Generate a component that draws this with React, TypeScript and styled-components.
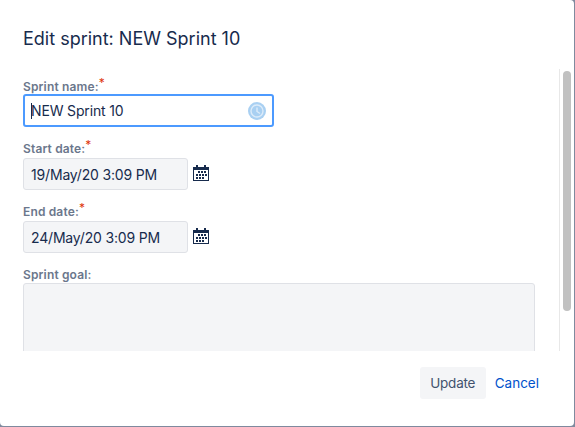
import React from "react";
import styled, { createGlobalStyle } from "styled-components";

const GlobalStyle = createGlobalStyle`
  html, body {
    margin: 0;
    padding: 0;
    background: #7f8a9e;
  }
  * {
    box-sizing: border-box;
  }
`;

const Dialog = styled.div`
  width: 574px;
  height: 426px;
  background: #fff;
  border-radius: 0 4px 4px 4px;
  display: flex;
  flex-direction: column;
  overflow: hidden;
  font-family: Inter, "Noto Sans", sans-serif;
`;

const Header = styled.div`
  height: 69px;
  flex: none;
  padding: 27px 23px 0;
`;

const Title = styled.h2`
  margin: 0;
  font-size: 18px;
  line-height: 24px;
  font-weight: 400;
  color: #172b4d;
`;

const Body = styled.div`
  flex: 1;
  min-height: 0;
  display: flex;
  overflow: hidden;
`;

const Form = styled.form`
  flex: 1;
  padding: 0 24px 0 23px;
  display: flex;
  flex-direction: column;
  gap: 4px;
`;

const Label = styled.label`
  display: block;
  height: 21px;
  padding-top: 10px;
  font-size: 12px;
  line-height: 16px;
  font-weight: 600;
  color: #6b778c;
  letter-spacing: 0.15px;
`;

const Star = styled.span`
  position: relative;
  top: -4px;
  color: #de350b;
  font-size: 12px;
  font-weight: 400;
  line-height: 0;
`;

const NameBox = styled.div`
  width: 251px;
  height: 33px;
  margin-top: 4px;
  border: 2px solid #4c9aff;
  border-radius: 3px;
  background: #fff;
  display: flex;
  align-items: center;
  justify-content: space-between;
  padding: 0 6px;
  font-size: 14px;
  letter-spacing: -0.15px;
  color: #172b4d;
`;

const Value = styled.span`
  white-space: nowrap;
`;

const Caret = styled.span`
  display: inline-block;
  width: 1px;
  height: 16px;
  background: #172b4d;
  vertical-align: -3px;
  margin-right: -1px;
`;

const DateRow = styled.div`
  display: flex;
  align-items: center;
  gap: 5px;
  margin-top: 6px;
`;

const DateBox = styled.div`
  width: 165px;
  height: 32px;
  padding: 0 7px;
  border: 1px solid #dfe1e6;
  border-radius: 3px;
  background: #f4f5f7;
  display: flex;
  align-items: center;
  font-size: 14px;
  letter-spacing: -0.17px;
  color: #172b4d;
  white-space: nowrap;
`;

const GoalBox = styled.div`
  width: 512px;
  height: 120px;
  margin-top: 5px;
  border: 1px solid #dfe1e6;
  border-radius: 3px;
  background: #f4f5f7;
`;

const ScrollTrack = styled.div`
  width: 15px;
  flex: none;
  border-left: 1px solid #e8e8e8;
  padding: 2px 3px 0;
`;

const ScrollThumb = styled.div`
  width: 8px;
  height: 240px;
  background: #c1c1c1;
  border-radius: 4px;
`;

const Footer = styled.div`
  height: 75px;
  flex: none;
  display: flex;
  justify-content: flex-end;
  align-items: flex-start;
  padding: 16px 35px 0 0;
  gap: 9px;
`;

const UpdateButton = styled.button`
  width: 66px;
  height: 32px;
  border: none;
  border-radius: 3px;
  background: #f4f5f7;
  color: #42526e;
  font: inherit;
  font-size: 13.5px;
  letter-spacing: -0.2px;
  padding: 0;
`;

const CancelLink = styled.a`
  color: #0052cc;
  font-size: 13.5px;
  line-height: 32px;
  text-decoration: none;
`;

const CalendarSvg = styled.svg`
  margin-bottom: 2px;
`;

const ClockIcon = () => (
  <svg width="18" height="18" viewBox="0 0 18 18">
    <circle cx="9" cy="9" r="9" fill="#a9d0f2" />
    <circle cx="9" cy="9" r="6" fill="#a9d0f2" stroke="#dcebf9" strokeWidth="1.4" />
    <path d="M9 5.5V9.5L12 11.5" fill="none" stroke="#dcebf9" strokeWidth="1.4" />
  </svg>
);

const CalendarIcon = () => (
  <CalendarSvg width="16" height="16" viewBox="0 0 16 16" fill="#172b4d">
    <rect x="3" y="0" width="2" height="3" />
    <rect x="11" y="0" width="2" height="3" />
    <path d="M0 2h16v14H0zM1 5v10h14V5z" fillRule="evenodd" />
    <path d="M5 6h2v2H5zM8 6h2v2H8zM11 6h2v2h-2zM3 9h2v2H3zM6 9h2v2H6zM9 9h2v2H9zM12 9h2v2h-2zM3 12h2v2H3zM6 12h2v2H6zM9 12h2v2H9z" />
  </CalendarSvg>
);

export default function App() {
  return (
    <>
      <GlobalStyle />
      <Dialog>
        <Header>
          <Title>Edit sprint: NEW Sprint 10</Title>
        </Header>
        <Body>
          <Form>
            <div>
              <Label>
                Sprint name:<Star>*</Star>
              </Label>
              <NameBox>
                <Value>
                  <Caret />
                  NEW Sprint 10
                </Value>
                <ClockIcon />
              </NameBox>
            </div>
            <div>
              <Label>
                Start date:<Star>*</Star>
              </Label>
              <DateRow>
                <DateBox>19/May/20 3:09 PM</DateBox>
                <CalendarIcon />
              </DateRow>
            </div>
            <div>
              <Label>
                End date:<Star>*</Star>
              </Label>
              <DateRow>
                <DateBox>24/May/20 3:09 PM</DateBox>
                <CalendarIcon />
              </DateRow>
            </div>
            <div>
              <Label>Sprint goal:</Label>
              <GoalBox />
            </div>
          </Form>
          <ScrollTrack>
            <ScrollThumb />
          </ScrollTrack>
        </Body>
        <Footer>
          <UpdateButton type="button">Update</UpdateButton>
          <CancelLink href="#">Cancel</CancelLink>
        </Footer>
      </Dialog>
    </>
  );
}
